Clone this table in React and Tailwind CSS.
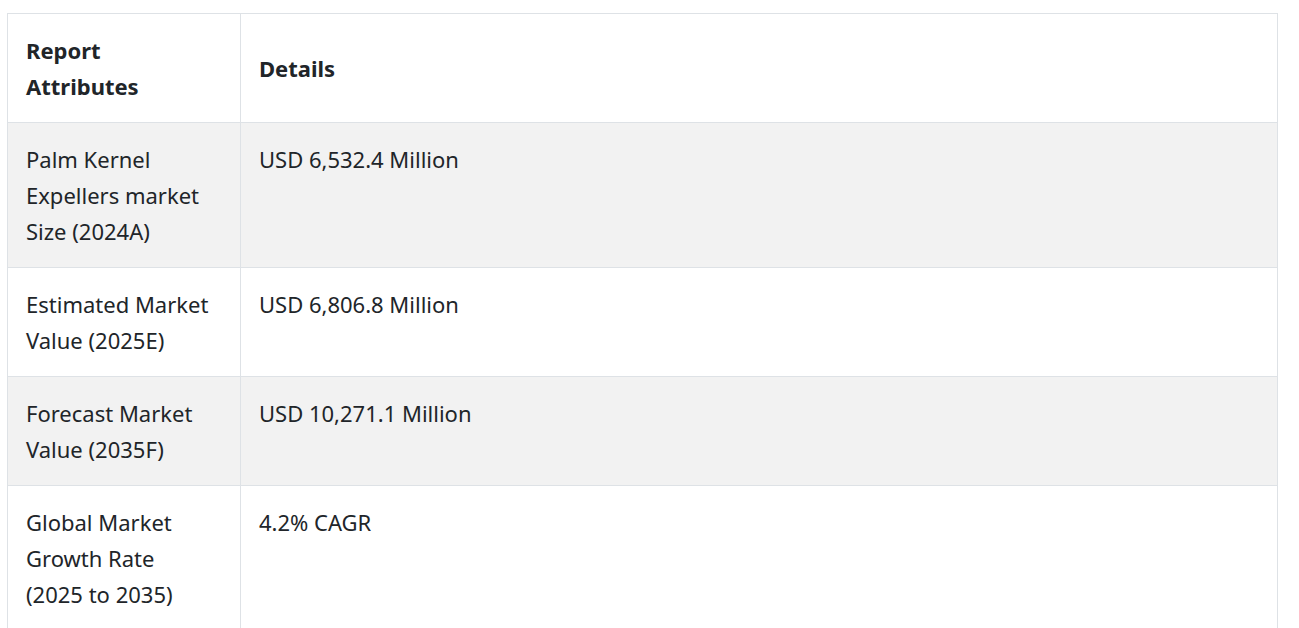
const rows = [
  { attr: "Palm Kernel Expellers market Size (2024A)", value: "USD 6,532.4 Million" },
  { attr: "Estimated Market Value (2025E)", value: "USD 6,806.8 Million" },
  { attr: "Forecast Market Value (2035F)", value: "USD 10,271.1 Million" },
  { attr: "Global Market Growth Rate (2025 to 2035)", value: "4.2% CAGR" },
];

export default function App() {
  return (
    <div className="min-h-screen bg-white pl-[7px] pr-[21px] pt-[13px] font-['Noto_Sans',sans-serif] text-[22px] leading-[36px] text-[#212529]">
      <table className="w-full border-collapse border border-[#dee2e6]">
        <thead>
          <tr>
            <th className="w-[233px] border border-[#dee2e6] p-[18px] text-left align-middle font-bold">
              <div className="max-w-[186px]">Report Attributes</div>
            </th>
            <th className="border border-[#dee2e6] p-[18px] text-left align-middle font-bold">
              Details
            </th>
          </tr>
        </thead>
        <tbody>
          {rows.map((row, i) => (
            <tr key={i} className={i % 2 === 0 ? "bg-[#f2f2f2]" : "bg-white"}>
              <td className="border border-[#dee2e6] p-[18px] align-top">
                <div className="max-w-[186px]">{row.attr}</div>
              </td>
              <td className="border border-[#dee2e6] p-[18px] align-top">{row.value}</td>
            </tr>
          ))}
        </tbody>
      </table>
    </div>
  );
}
